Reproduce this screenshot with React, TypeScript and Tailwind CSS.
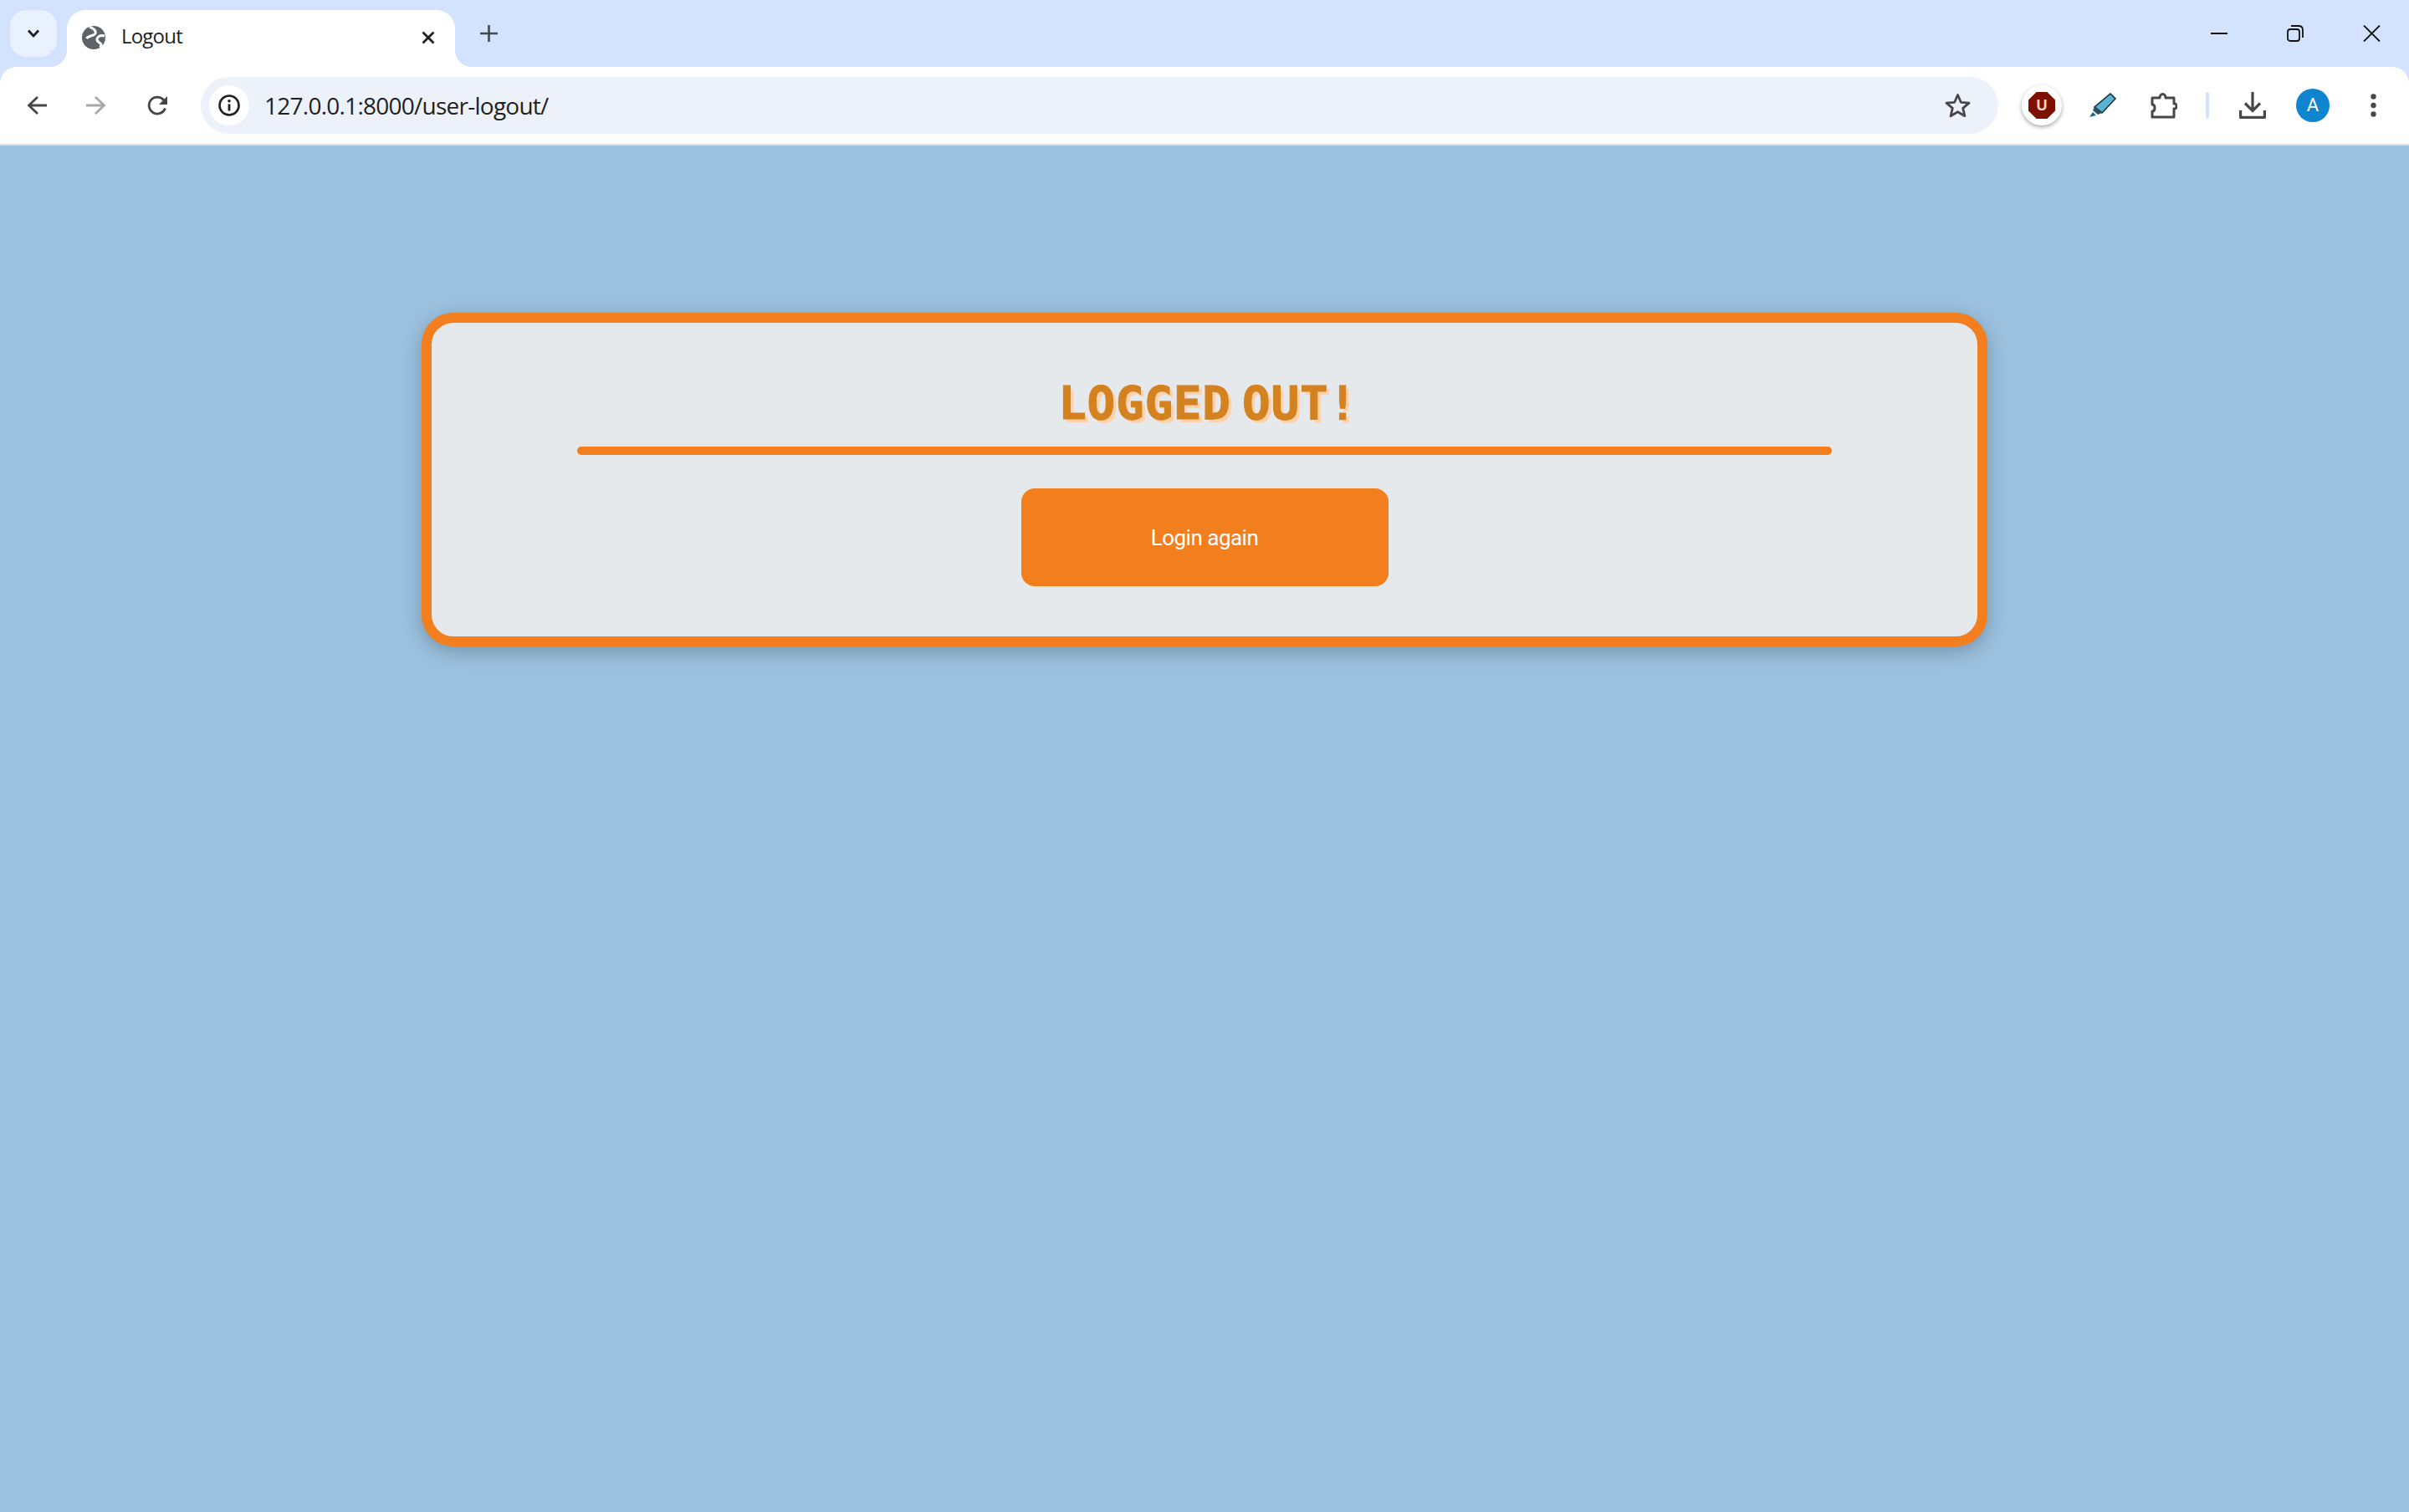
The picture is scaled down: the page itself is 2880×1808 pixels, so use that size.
const TabStrip = () => (
  <div className="flex h-20 items-end bg-[#d3e3fd] pl-3">
    <div className="mb-3 flex h-14 w-14 items-center justify-center rounded-[20px] bg-[#e9f1fe]">
      <svg width="16" height="12" viewBox="0 0 16 12" fill="none" stroke="#1f1f1f" strokeWidth="2.8">
        <path d="M2 2.500l6 6.500 6-6.500" />
      </svg>
    </div>
    {/* active tab */}
    <div className="relative ml-3 flex h-[68px] w-[464px] items-center rounded-t-[22px] bg-white pb-[2px] pl-[18px] pr-6">
      <div className="absolute bottom-0 left-[-20px] h-5 w-5 bg-white">
        <div className="h-full w-full rounded-br-[20px] bg-[#d3e3fd]" />
      </div>
      <div className="absolute bottom-0 right-[-20px] h-5 w-5 bg-white">
        <div className="h-full w-full rounded-bl-[20px] bg-[#d3e3fd]" />
      </div>
      <svg width="28" height="28" viewBox="0 0 28 28">
        <circle cx="14" cy="14" r="14" fill="#5f6368" />
        <path d="M9 1c5 2 8 5 7 8-1.500 3.500-8 2-10.500 6M27 12c-4-1-7 0-8.500 2.500s.5 4.500 3 6 1.500 3.500 0 5" fill="none" stroke="#fff" strokeWidth="3" />
      </svg>
      <span className="mb-1 ml-[19px] font-['Open_Sans',sans-serif] text-[24px] leading-none tracking-[-0.8px] text-[#1f1f1f]">Logout</span>
      <svg className="ml-auto" width="16" height="16" viewBox="0 0 16 16" fill="none" stroke="#1f1f1f" strokeWidth="2.800">
        <path d="M1.500 1.500l13 13M14.500 1.500l-13 13" />
      </svg>
    </div>
    <svg className="mb-[30px] ml-[30px]" width="21" height="20" viewBox="0 0 21 20" fill="none" stroke="#474747" strokeWidth="2.600">
      <path d="M10.500 0v20M0 10h21" />
    </svg>
    {/* window controls */}
    <div className="mb-[30px] ml-auto flex h-5 items-center gap-[71px] pr-[34px]">
      <svg width="20" height="2" viewBox="0 0 20 2"><path d="M0 1h20" stroke="#111" strokeWidth="2" /></svg>
      <svg width="20" height="20" viewBox="0 0 20 20" fill="none" stroke="#111" strokeWidth="1.800">
        <rect x="1" y="5" width="14" height="14" rx="3" />
        <path d="M5 1h9q5 0 5 5v9" />
      </svg>
      <svg width="21" height="20" viewBox="0 0 21 20" fill="none" stroke="#111" strokeWidth="1.800">
        <path d="M1 .500l19 19M20 .500l-19 19" />
      </svg>
    </div>
  </div>
);

const Toolbar = () => (
  <div className="relative flex h-[92px] items-center rounded-t-[20px] bg-white pl-8 pr-[39px]">
    <svg width="24" height="22" viewBox="0 0 24 22" fill="none" stroke="#474747" strokeWidth="2.800">
      <path d="M24 11H3M13 1L2.500 11 13 21" />
    </svg>
    <svg className="ml-[47px]" width="25" height="22" viewBox="0 0 25 22" fill="none" stroke="#a8a8a8" strokeWidth="2.800">
      <path d="M0 11h21M11 1l10.500 10L11 21" />
    </svg>
    <svg className="ml-12" width="25" height="24" viewBox="0 0 25 24">
      <path d="M21.500 15.500a10 10 0 1 1-1.800-10L22 8" fill="none" stroke="#474747" strokeWidth="2.800" />
      <path d="M24 1v10H14z" fill="#474747" />
    </svg>
    {/* address bar */}
    <div className="ml-[39px] flex h-[68px] flex-1 items-center rounded-full bg-[#ecf1fa] pl-[10px] pr-[33px]">
      <div className="flex h-12 w-12 items-center justify-center rounded-full bg-white">
        <svg width="26" height="26" viewBox="0 0 26 26" fill="none">
          <circle cx="13" cy="13" r="11.500" stroke="#1f1f1f" strokeWidth="2.600" />
          <path d="M13 11.500v8" stroke="#1f1f1f" strokeWidth="2.800" />
          <circle cx="13" cy="7.800" r="1.800" fill="#1f1f1f" />
        </svg>
      </div>
      <span className="ml-[18px] font-['Open_Sans',sans-serif] text-[28px] leading-none tracking-[-0.75px] text-[#1f1f1f]">127.0.0.1:8000/user-logout/</span>
      <svg className="ml-auto" width="31" height="30" viewBox="0 0 31 30" fill="none" stroke="#474747" strokeWidth="2.800" strokeLinejoin="round">
        <path d="M15.500 2.500l3.800 8.800 9.700.8-7.300 6.300 2.200 9.300-8.400-5-8.400 5 2.200-9.300L2 12.100l9.700-.8z" />
      </svg>
    </div>
    {/* extensions */}
    <div className="ml-7 flex h-12 w-12 items-center justify-center rounded-full bg-white shadow-[0_2px_5px_rgba(0,0,0,0.35)]">
      <div className="flex h-8 w-8 items-center justify-center bg-[#7e1000] font-['Liberation_Sans',sans-serif] text-[18px] font-bold leading-none text-[#f2d5d0] [clip-path:polygon(30%_0,70%_0,100%_30%,100%_70%,70%_100%,30%_100%,0_70%,0_30%)]">U</div>
    </div>
    <svg className="ml-8" width="33" height="30" viewBox="0 0 33 30">
      <path d="M26 1l6 6-16 17-9-7z" fill="#5bb3d3" stroke="#14323f" strokeWidth="1.600" />
      <path d="M7 17l9 7-5 2-6-5z" fill="#31515f" />
      <path d="M5 23l4 4-8 2z" fill="#1d6e8c" />
    </svg>
    <svg className="ml-[41px]" width="32" height="32" viewBox="0 0 32 32" fill="none" stroke="#474747" strokeWidth="3" strokeLinejoin="round">
      <path d="M2 7h9c0-6 7-6 7 0h10v7c4-1 4 7 0 6v10H2v-7c4 0 4-8 0-8z" />
    </svg>
    <div className="ml-[34px] h-8 w-1 rounded-full bg-[#d3e3fd]" />
    <svg className="ml-9" width="32" height="32" viewBox="0 0 32 32" fill="none" stroke="#474747" strokeWidth="3.200">
      <path d="M16 0v22M7 13.500l9 9 9-9" />
      <path d="M1.600 22v8.400h28.800V22" strokeLinejoin="round" />
    </svg>
    <div className="ml-9 flex h-10 w-10 items-center justify-center rounded-full bg-[#0f84cf] font-['Roboto',sans-serif] text-[22px] leading-none text-white">A</div>
    <svg className="ml-[49px]" width="7" height="28" viewBox="0 0 7 28" fill="#474747">
      <circle cx="3.500" cy="3.500" r="3.200" />
      <circle cx="3.500" cy="14" r="3.200" />
      <circle cx="3.500" cy="24.500" r="3.200" />
    </svg>
  </div>
);

const LogoutCard = () => (
  <div className="mx-auto mt-[200px] flex h-[399px] w-[1872px] flex-col items-center rounded-[38px] border-[12px] border-[#f27e1e] bg-[#e5e9ec] pt-[66px] shadow-[0_6px_24px_rgba(0,0,0,0.25)]">
    <h1 className="h-[82px] pl-[8px] font-['DejaVu_Sans_Mono',monospace] text-[56px] font-bold leading-[60px] tracking-[0.7px] text-[#d4821f] [-webkit-text-stroke:1px_#d4821f] [text-shadow:4px_4px_0_#ffd2ad] [word-spacing:-21px]">
      LOGGED OUT!
    </h1>
    <div className="h-[10px] w-[1500px] rounded-full bg-[#f27e1e]" />
    <button className="mt-10 h-[117px] w-[439px] rounded-[16px] bg-[#f27e1e] pt-[2px] font-['Roboto',sans-serif] text-[26px] tracking-[-0.5px] text-white">
      Login again
    </button>
  </div>
);

export default function App() {
  return (
    <div className="flex h-[1808px] flex-col bg-[#9cc2e0]">
      <div className="bg-[#d3e3fd]">
        <TabStrip />
        <Toolbar />
      </div>
      <div className="h-[2px] bg-[#e0e0e0]" />
      <LogoutCard />
    </div>
  );
}
